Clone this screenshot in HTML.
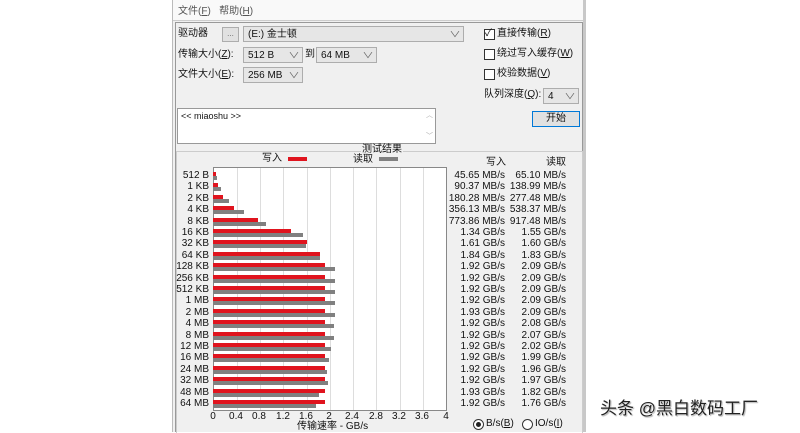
<!DOCTYPE html>
<html><head><meta charset="utf-8"><style>
*{margin:0;padding:0;box-sizing:border-box}
body{width:800px;height:432px;background:#fff;position:relative;overflow:hidden;font-family:"Liberation Sans","Noto Sans CJK SC",sans-serif;font-size:10px;line-height:12px;color:#111}
.a{position:absolute;white-space:nowrap}
.sel{position:absolute;background:#e6e6e6;border:1px solid #adadad;height:16px;padding:1px 4px;font-size:10px;line-height:13px}
.sel:after{content:"∨";position:absolute;right:4px;top:1px;color:#666;font-size:8px;transform:scaleX(1.4)}
.cb{position:absolute;width:11px;height:11px;border:1px solid #333;background:#fff}
.r{position:absolute;left:0;height:11.4px;width:400px}
.lab{position:absolute;left:-48px;width:44px;text-align:right;top:-1px;font-size:10px;line-height:11px}
.rb{position:absolute;left:0;top:1px;height:4px;background:#e0141e}
.gb{position:absolute;left:0;top:5px;height:4px;background:#808080}
.w{position:absolute;left:230px;width:62px;text-align:right;top:-1px;line-height:11px}
.d{position:absolute;left:292px;width:61px;text-align:right;top:-1px;line-height:11px}
.t{position:absolute;top:411px;width:30px;margin-left:-15px;text-align:center;font-size:10px}
.g{position:absolute;top:0;bottom:0;width:1px;background:#ddd}
</style></head><body>
<div class="a" style="left:172px;top:0;width:414px;height:432px;background:#f0f0f0;border-left:1px solid #bbb;border-right:3px solid #c8c8c8"></div>
<div class="a" style="left:173px;top:0;width:410px;height:21px;background:#f9f9f9;border-bottom:1px solid #ccc"></div>
<div class="a" style="left:178px;top:6px;color:#555">文件(<u>F</u>)&nbsp;&nbsp;&nbsp;帮助(<u>H</u>)</div>
<div class="a" style="left:175px;top:22px;width:408px;height:410px;border:1px solid #999;border-bottom:none"></div>

<div class="a" style="left:178px;top:28px">驱动器</div>
<div class="a" style="left:222px;top:27px;width:17px;height:15px;background:#e1e1e1;border:1px solid #adadad;text-align:center;font-size:8px;line-height:11px;color:#666">...</div>
<div class="sel" style="left:243px;top:26px;width:221px">(E:) 金士顿</div>
<div class="a" style="left:178px;top:49px">传输大小(<u>Z</u>):</div>
<div class="sel" style="left:243px;top:47px;width:60px">512 B</div>
<div class="a" style="left:305px;top:49px">到</div>
<div class="sel" style="left:316px;top:47px;width:61px">64 MB</div>
<div class="a" style="left:178px;top:69px">文件大小(<u>E</u>):</div>
<div class="sel" style="left:243px;top:67px;width:60px">256 MB</div>

<div class="cb" style="left:484px;top:29px"></div><div class="a" style="left:485px;top:28px;font-size:10px">✓</div>
<div class="a" style="left:497px;top:28px">直接传输(<u>R</u>)</div>
<div class="cb" style="left:484px;top:49px"></div><div class="a" style="left:497px;top:48px">绕过写入缓存(<u>W</u>)</div>
<div class="cb" style="left:484px;top:69px"></div><div class="a" style="left:497px;top:68px">校验数据(<u>V</u>)</div>
<div class="a" style="left:484px;top:89px">队列深度(<u>Q</u>):</div>
<div class="sel" style="left:543px;top:88px;width:36px">4</div>
<div class="a" style="left:532px;top:111px;width:48px;height:16px;background:#e1e1e1;border:1px solid #0078d7;text-align:center;line-height:14px">开始</div>

<div class="a" style="left:177px;top:108px;width:259px;height:36px;background:#fff;border:1px solid #999;padding:1px 3px;font-size:9px">&lt;&lt; miaoshu &gt;&gt;</div>
<div class="a" style="left:426px;top:110px;color:#aaa;font-size:7px">︿</div>
<div class="a" style="left:426px;top:131px;color:#aaa;font-size:7px">﹀</div>

<div class="a" style="left:176px;top:151px;width:407px;height:282px;border:1px solid #ccc;border-bottom:none"></div>
<div class="a" style="left:361px;top:144px;background:#f0f0f0;padding:0 1px">测试结果</div>
<div class="a" style="left:262px;top:153px">写入</div>
<div class="a" style="left:288px;top:157px;width:19px;height:4px;background:#e0141e"></div>
<div class="a" style="left:353px;top:154px">读取</div>
<div class="a" style="left:379px;top:157px;width:19px;height:4px;background:#808080"></div>
<div class="a" style="left:486px;top:157px">写入</div>
<div class="a" style="left:546px;top:157px">读取</div>

<div class="a" style="left:213px;top:167px;width:234px;height:244px;background:#fff;border:1px solid #888">
<div class="g" style="left:23px"></div><div class="g" style="left:46px"></div><div class="g" style="left:69px"></div><div class="g" style="left:93px"></div><div class="g" style="left:116px"></div><div class="g" style="left:139px"></div><div class="g" style="left:162px"></div><div class="g" style="left:186px"></div><div class="g" style="left:209px"></div>
</div>

<div class="a" style="left:213px;top:0;width:1px;height:1px">
<div class="r" style="top:171px"><div class="lab">512 B</div><div class="rb" style="width:3px"></div><div class="gb" style="width:4px"></div><div class="w">45.65 MB/s</div><div class="d">65.10 MB/s</div></div>
<div class="r" style="top:182.4px"><div class="lab">1 KB</div><div class="rb" style="width:5px"></div><div class="gb" style="width:8px"></div><div class="w">90.37 MB/s</div><div class="d">138.99 MB/s</div></div>
<div class="r" style="top:193.8px"><div class="lab">2 KB</div><div class="rb" style="width:10px"></div><div class="gb" style="width:16px"></div><div class="w">180.28 MB/s</div><div class="d">277.48 MB/s</div></div>
<div class="r" style="top:205.2px"><div class="lab">4 KB</div><div class="rb" style="width:21px"></div><div class="gb" style="width:31px"></div><div class="w">356.13 MB/s</div><div class="d">538.37 MB/s</div></div>
<div class="r" style="top:216.6px"><div class="lab">8 KB</div><div class="rb" style="width:45px"></div><div class="gb" style="width:53px"></div><div class="w">773.86 MB/s</div><div class="d">917.48 MB/s</div></div>
<div class="r" style="top:228px"><div class="lab">16 KB</div><div class="rb" style="width:78px"></div><div class="gb" style="width:90px"></div><div class="w">1.34 GB/s</div><div class="d">1.55 GB/s</div></div>
<div class="r" style="top:239.4px"><div class="lab">32 KB</div><div class="rb" style="width:94px"></div><div class="gb" style="width:93px"></div><div class="w">1.61 GB/s</div><div class="d">1.60 GB/s</div></div>
<div class="r" style="top:250.8px"><div class="lab">64 KB</div><div class="rb" style="width:107px"></div><div class="gb" style="width:107px"></div><div class="w">1.84 GB/s</div><div class="d">1.83 GB/s</div></div>
<div class="r" style="top:262.2px"><div class="lab">128 KB</div><div class="rb" style="width:112px"></div><div class="gb" style="width:122px"></div><div class="w">1.92 GB/s</div><div class="d">2.09 GB/s</div></div>
<div class="r" style="top:273.6px"><div class="lab">256 KB</div><div class="rb" style="width:112px"></div><div class="gb" style="width:122px"></div><div class="w">1.92 GB/s</div><div class="d">2.09 GB/s</div></div>
<div class="r" style="top:285px"><div class="lab">512 KB</div><div class="rb" style="width:112px"></div><div class="gb" style="width:122px"></div><div class="w">1.92 GB/s</div><div class="d">2.09 GB/s</div></div>
<div class="r" style="top:296.4px"><div class="lab">1 MB</div><div class="rb" style="width:112px"></div><div class="gb" style="width:122px"></div><div class="w">1.92 GB/s</div><div class="d">2.09 GB/s</div></div>
<div class="r" style="top:307.8px"><div class="lab">2 MB</div><div class="rb" style="width:112px"></div><div class="gb" style="width:122px"></div><div class="w">1.93 GB/s</div><div class="d">2.09 GB/s</div></div>
<div class="r" style="top:319.2px"><div class="lab">4 MB</div><div class="rb" style="width:112px"></div><div class="gb" style="width:121px"></div><div class="w">1.92 GB/s</div><div class="d">2.08 GB/s</div></div>
<div class="r" style="top:330.6px"><div class="lab">8 MB</div><div class="rb" style="width:112px"></div><div class="gb" style="width:121px"></div><div class="w">1.92 GB/s</div><div class="d">2.07 GB/s</div></div>
<div class="r" style="top:342px"><div class="lab">12 MB</div><div class="rb" style="width:112px"></div><div class="gb" style="width:118px"></div><div class="w">1.92 GB/s</div><div class="d">2.02 GB/s</div></div>
<div class="r" style="top:353.4px"><div class="lab">16 MB</div><div class="rb" style="width:112px"></div><div class="gb" style="width:116px"></div><div class="w">1.92 GB/s</div><div class="d">1.99 GB/s</div></div>
<div class="r" style="top:364.8px"><div class="lab">24 MB</div><div class="rb" style="width:112px"></div><div class="gb" style="width:114px"></div><div class="w">1.92 GB/s</div><div class="d">1.96 GB/s</div></div>
<div class="r" style="top:376.2px"><div class="lab">32 MB</div><div class="rb" style="width:112px"></div><div class="gb" style="width:115px"></div><div class="w">1.92 GB/s</div><div class="d">1.97 GB/s</div></div>
<div class="r" style="top:387.6px"><div class="lab">48 MB</div><div class="rb" style="width:112px"></div><div class="gb" style="width:106px"></div><div class="w">1.93 GB/s</div><div class="d">1.82 GB/s</div></div>
<div class="r" style="top:399px"><div class="lab">64 MB</div><div class="rb" style="width:112px"></div><div class="gb" style="width:103px"></div><div class="w">1.92 GB/s</div><div class="d">1.76 GB/s</div></div>
</div>

<div class="t" style="left:213px">0</div><div class="t" style="left:236px">0.4</div><div class="t" style="left:259px">0.8</div><div class="t" style="left:283px">1.2</div><div class="t" style="left:306px">1.6</div><div class="t" style="left:329px">2</div><div class="t" style="left:352px">2.4</div><div class="t" style="left:376px">2.8</div><div class="t" style="left:399px">3.2</div><div class="t" style="left:422px">3.6</div><div class="t" style="left:446px">4</div>
<div class="a" style="left:297px;top:421px">传输速率 - GB/s</div>

<div class="a" style="left:473px;top:419px;width:11px;height:11px;border:1px solid #333;border-radius:50%;background:#fff"><div style="position:absolute;left:2px;top:2px;width:5px;height:5px;border-radius:50%;background:#222"></div></div>
<div class="a" style="left:486px;top:418px">B/s(<u>B</u>)</div>
<div class="a" style="left:522px;top:419px;width:11px;height:11px;border:1px solid #333;border-radius:50%;background:#fff"></div>
<div class="a" style="left:535px;top:418px">IO/s(<u>I</u>)</div>

<div class="a" style="left:600px;top:399px;font-size:17px;line-height:20px;color:#222;text-shadow:0 0 2px #fff,1px 1px 1px #999">头条 @黑白数码工厂</div>
</body></html>
